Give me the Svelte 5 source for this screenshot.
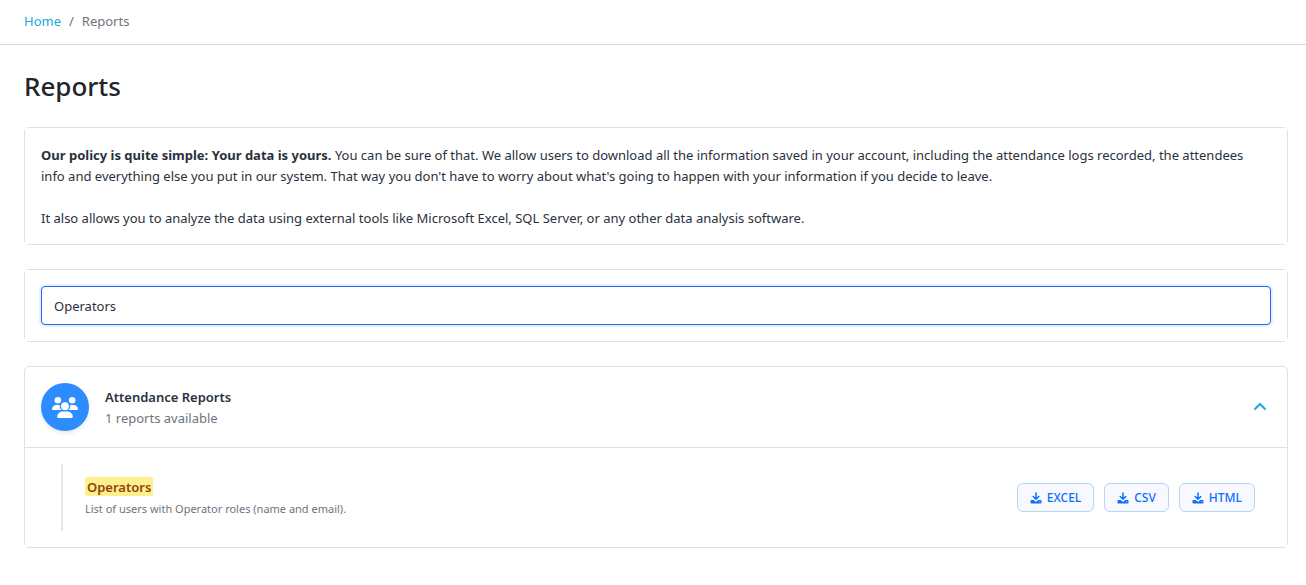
<script lang="ts">
  type Report = { name: string; description: string; formats: string[] };

  const reports: Report[] = [
    {
      name: "Operators",
      description: "List of users with Operator roles (name and email).",
      formats: ["EXCEL", "CSV", "HTML"],
    },
  ];

  let query = $state("Operators");
  let open = $state(true);

  const term = $derived(query.trim().toLowerCase());
  const matches = $derived(reports.filter((r) => r.name.toLowerCase().includes(term)));

  function split(name: string) {
    const at = name.toLowerCase().indexOf(term);
    return [name.slice(0, at), name.slice(at, at + term.length), name.slice(at + term.length)];
  }
</script>

<nav class="breadcrumb" aria-label="Breadcrumb">
  <a href="/">Home</a>
  <span>/</span>
  <span>Reports</span>
</nav>

<main>
  <h1>Reports</h1>

  <section class="card">
    <div class="card-body policy">
      <p>
        <strong>Our policy is quite simple: Your data is yours.</strong> You can be sure of that. We
        allow users to download all the information saved in your account, including the attendance
        logs recorded, the attendees info and everything else you put in our system. That way you
        don't have to worry about what's going to happen with your information if you decide to
        leave.
      </p>
      <p>
        It also allows you to analyze the data using external tools like Microsoft Excel, SQL
        Server, or any other data analysis software.
      </p>
    </div>
  </section>

  <section class="card">
    <div class="card-body">
      <input class="search" type="text" aria-label="Search reports" bind:value={query} />
    </div>
  </section>

  <section class="card">
    <button class="group-header" class:open aria-expanded={open} onclick={() => (open = !open)}>
      <span class="group-icon">
        <svg viewBox="0 0 640 512" width="26" height="21" fill="currentColor" aria-hidden="true">
          <circle cx="144" cy="80" r="80" />
          <circle cx="496" cy="80" r="80" />
          <path d="M0 298.700C0 239.800 47.800 192 106.700 192h42.700c15.900 0 31 3.500 44.600 9.700-1.300 7.200-1.900 14.700-1.900 22.300 0 38.200 16.800 72.500 43.300 96H21.300C9.600 320 0 310.400 0 298.700zM405.300 320h-.700c26.600-23.500 43.300-57.800 43.300-96 0-7.600-.700-15-1.900-22.300 13.600-6.300 28.700-9.700 44.600-9.700h42.700C592.200 192 640 239.800 640 298.700c0 11.800-9.600 21.300-21.300 21.300z" />
          <circle cx="320" cy="224" r="96" />
          <path d="M128 485.300C128 411.700 187.700 352 261.300 352h117.400C452.300 352 512 411.700 512 485.300c0 14.700-11.900 26.700-26.700 26.700H154.700c-14.700 0-26.700-11.900-26.700-26.700z" />
        </svg>
      </span>
      <span class="group-text">
        <span class="group-title">Attendance Reports</span>
        <span class="group-count">{matches.length} reports available</span>
      </span>
      <svg class="chevron" viewBox="0 0 14 14" width="14" height="14" aria-hidden="true">
        <path d="M1.500 9.500 7 4l5.500 5.500" fill="none" stroke="currentColor" stroke-width="2" />
      </svg>
    </button>

    {#if open}
      <div class="group-body">
        {#each matches as report}
          {@const [before, hit, after] = split(report.name)}
          <div class="report">
            <div class="report-info">
              <div class="report-name">{before}<mark>{hit}</mark>{after}</div>
              <div class="report-desc">{report.description}</div>
            </div>
            <div class="actions">
              {#each report.formats as format}
                <button class="download">
                  <svg viewBox="0 0 12 12" width="12" height="12" aria-hidden="true">
                    <path d="M6 1v6M3.200 4.500 6 7.200l2.800-2.700" fill="none" stroke="currentColor" stroke-width="1.500" stroke-linecap="round" stroke-linejoin="round" />
                    <path d="M1.500 8h2.300l1.300 1.200a1.300 1.300 0 0 0 1.800 0L8.200 8h2.300a1 1 0 0 1 1 1v1.500a1 1 0 0 1-1 1h-9a1 1 0 0 1-1-1V9a1 1 0 0 1 1-1zm8.300 1.300a.5.500 0 1 0 0 1 .5.500 0 0 0 0-1z" fill="currentColor" fill-rule="evenodd" />
                  </svg>
                  {format}
                </button>
              {/each}
            </div>
          </div>
        {/each}
      </div>
    {/if}
  </section>
</main>

<style>
  :global(body) {
    margin: 0;
    background: #fff;
    color: #29313d;
    font-family: "Segoe UI", "Noto Sans", "Open Sans", sans-serif;
    font-size: 13px;
    line-height: 21px;
  }

  button,
  input {
    font: inherit;
    color: inherit;
    box-sizing: border-box;
  }

  .breadcrumb {
    display: flex;
    gap: 8px;
    padding: 11px 24px 12px;
    border-bottom: 1px solid #d8dbe0;
    color: #6c757d;
  }
  .breadcrumb a {
    color: #20a8d8;
    text-decoration: none;
  }

  main {
    padding: 24px 18px 24px 24px;
  }

  h1 {
    margin: 0 0 24px;
    font-size: 26px;
    font-weight: 500;
    line-height: 34px;
    color: #212529;
  }

  .card {
    margin-bottom: 24px;
    border: 1px solid #dee0e4;
    border-radius: 5px;
  }

  .card-body {
    padding: 16px;
    background: #fff;
  }
  .policy {
    padding: 17px 24px 15px 16px;
  }
  .card-body p {
    margin: 0;
  }
  .card-body p + p {
    margin-top: 21px;
  }

  .search {
    display: block;
    width: 100%;
    height: 39px;
    padding: 8px 12px;
    border: 1px solid #2563eb;
    border-radius: 4px;
    outline: none;
    background: #fff;
    box-shadow: 0 0 0 2px rgba(37, 99, 235, 0.1);
  }

  .group-header {
    display: flex;
    align-items: center;
    gap: 16px;
    width: 100%;
    padding: 16px;
    border: 0;
    background: none;
    text-align: left;
    cursor: pointer;
  }
  .group-header.open {
    border-bottom: 1px solid #dee0e4;
  }

  .group-icon {
    display: flex;
    align-items: center;
    justify-content: center;
    width: 48px;
    height: 48px;
    border-radius: 50%;
    background: #2d8cff;
    color: #fff;
    box-shadow: 0 2px 4px rgba(0, 0, 0, 0.1);
  }

  .group-text {
    display: flex;
    flex: 1;
    flex-direction: column;
    padding-top: 2px;
  }
  .group-title {
    font-weight: 600;
  }
  .group-count {
    color: #6c757d;
  }

  .chevron {
    margin-right: 4px;
    color: #20a8d8;
  }

  .group-body {
    padding: 16px 16px 16px 36px;
    background: #fff;
  }

  .report {
    display: flex;
    align-items: center;
    justify-content: space-between;
    padding: 13px 16px 13px 22px;
    border-left: 2px solid #e5e7eb;
  }
  .report-name {
    margin-bottom: 2px;
    font-weight: 600;
  }
  .report-name mark {
    padding: 1px 2px 0;
    border-radius: 2px;
    background: #fef08a;
    color: #92400e;
  }
  .report-desc {
    font-size: 11px;
    line-height: 18px;
    color: #6c757d;
  }

  .actions {
    display: flex;
    gap: 10px;
  }

  .download {
    display: flex;
    align-items: center;
    gap: 5px;
    padding: 4px 12px;
    border: 1px solid #b6d4fe;
    border-radius: 6px;
    background: #f8f9ff;
    color: #0d6efd;
    font-size: 12px;
    font-weight: 500;
    line-height: 19px;
    cursor: pointer;
  }
</style>
